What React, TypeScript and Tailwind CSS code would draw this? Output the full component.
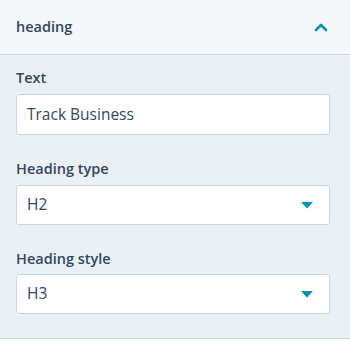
import React from "react";

function Caret() {
  return (
    <svg width="12" height="7" viewBox="0 0 12 7" className="shrink-0">
      <path d="M0 0 H12 L6 6.5 Z" fill="#0091ae" />
    </svg>
  );
}

function SelectBox({ value }: { value: string }) {
  return (
    <div className="h-[40px] w-full bg-white border border-[#cbd6e2] rounded-[3px] flex items-center justify-between pl-[10px] pr-[16px]">
      <span className="text-[15.5px] text-[#33475b]">{value}</span>
      <Caret />
    </div>
  );
}

export default function App() {
  return (
    <div
      className="w-[350px] h-[340px] bg-white text-[#33475b]"
      style={{ fontFamily: "'Open Sans', 'Noto Sans', sans-serif" }}
    >
      <div className="h-[55px] bg-[#f5f8fa] border-b border-[#cbd6e2] flex items-center justify-between pl-[16px] pr-[22px]">
        <span className="text-[14.5px] font-semibold text-[#33475b]">heading</span>
        <svg width="14" height="9" viewBox="0 0 14 9">
          <path d="M2 7 L7 2 L12 7" fill="none" stroke="#0091ae" strokeWidth="2.6" strokeLinecap="round" strokeLinejoin="round" />
        </svg>
      </div>
      <div className="h-[284px] bg-[#eaf0f6] border-b border-[#cbd6e2] pl-[16px] pr-[20px] pt-[13px] flex flex-col">
        <label className="text-[14.5px] leading-[20px] font-semibold">Text</label>
        <div className="mt-[6px] h-[41px] bg-white border border-[#cbd6e2] rounded-[3px] flex items-center pl-[10px]">
          <span className="text-[15.5px]">Track Business</span>
        </div>
        <label className="mt-[24px] text-[14.5px] leading-[20px] font-semibold">Heading type</label>
        <div className="mt-[6px]">
          <SelectBox value="H2" />
        </div>
        <label className="mt-[24px] text-[14.5px] leading-[20px] font-semibold">Heading style</label>
        <div className="mt-[5px]">
          <SelectBox value="H3" />
        </div>
      </div>
    </div>
  );
}
